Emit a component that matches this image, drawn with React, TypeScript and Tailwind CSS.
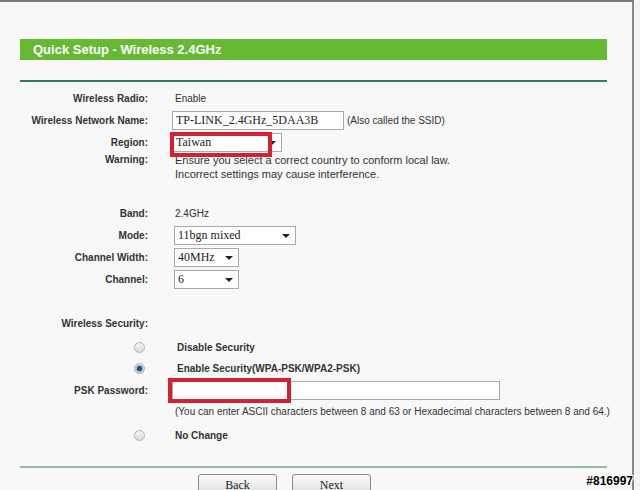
import React from 'react';

const font = { fontFamily: '"Liberation Sans", Arial, sans-serif' };
const serif = '[font-family:Liberation_Serif,serif]';

function Row({ label, children, h = 'h-[22px]' }: { label?: React.ReactNode; children?: React.ReactNode; h?: string }) {
  return (
    <div className={`flex items-center ${h}`}>
      <div className="w-[128px] shrink-0 whitespace-nowrap text-right font-bold text-[#333]">{label}</div>
      <div className="ml-[24px] flex items-center whitespace-nowrap">{children}</div>
    </div>
  );
}

function Select({ value, w }: { value: string; w: string }) {
  return (
    <div className={`relative flex h-[19px] items-center border border-[#a9a9a9] bg-white pl-[3px] text-[12px] text-[#222] ${serif} ${w}`}>
      {value}
      <span className="absolute right-[5px] top-[7px] h-0 w-0 border-x-[4px] border-t-[4px] border-x-transparent border-t-[#222]" />
    </div>
  );
}

function Radio({ checked }: { checked?: boolean }) {
  return (
    <span className="mr-[3px] flex h-[11px] w-[11px] items-center justify-center rounded-full border border-[#b5b5b5] bg-gradient-to-b from-[#f2f2f2] to-[#dcdcdc]">
      {checked && <span className="h-[5px] w-[5px] rounded-full bg-[#1f4f7a] shadow-[0_0_2px_1px_#6aa0cf]" />}
    </span>
  );
}

export default function App() {
  return (
    <div className="relative h-[490px] w-[640px] overflow-hidden bg-[#f4f4f4] text-[10px] text-[#333]" style={font}>
      <div className="h-[490px] w-[634px] border-r-[2px] border-t-[2px] border-r-[#8a8a8a] border-t-[#777] bg-[#f8f8f8] pl-[20px] pt-[37px]">
        <div className="flex h-[21px] w-[587px] items-center bg-[#66b933] pl-[13px] text-[13px] font-bold text-white">
          Quick Setup - Wireless 2.4GHz
        </div>
        <div className="mt-[20px] h-[2px] w-[587px] bg-[#2f7d5c]" />

        <div className="mt-[5px]">
          <Row label="Wireless Radio:">
            <span className="pl-[3px]">Enable</span>
          </Row>
          <Row label="Wireless Network Name:">
            <div className={`flex h-[19px] w-[172px] items-center border border-[#a9a9a9] bg-white pl-[3px] text-[12px] text-[#222] ${serif}`}>
              TP-LINK_2.4GHz_5DAA3B
            </div>
            <span className="ml-[3px]">(Also called the SSID)</span>
          </Row>
          <Row label="Region:">
            <div className="relative">
              <Select value="Taiwan" w="w-[110px]" />
              <div className="absolute left-[-2px] top-[-1px] h-[25px] w-[102px] border-[4px] border-[#d42030]" />
            </div>
          </Row>
          <div className="flex">
            <div className="w-[128px] shrink-0 text-right font-bold leading-[14px]">Warning:</div>
            <div className="ml-[27px] text-[11px] leading-[14px]">
              Ensure you select a correct country to conform local law.
              <br />
              Incorrect settings may cause interference.
            </div>
          </div>
        </div>

        <div className="mt-[21px]">
          <Row label="Band:">
            <span className="pl-[3px]">2.4GHz</span>
          </Row>
          <Row label="Mode:">
            <div className="pl-[2px]">
              <Select value="11bgn mixed" w="w-[122px]" />
            </div>
          </Row>
          <Row label="Channel Width:">
            <div className="pl-[2px]">
              <Select value="40MHz" w="w-[65px]" />
            </div>
          </Row>
          <Row label="Channel:">
            <div className="pl-[2px]">
              <Select value="6" w="w-[65px]" />
            </div>
          </Row>
        </div>

        <div className="mt-[22px]">
          <Row label="Wireless Security:" />
          <Row label={<div className="flex justify-end"><Radio /></div>} h="mt-[2px] h-[22px]">
            <span className="pl-[5px] font-bold">Disable Security</span>
          </Row>
          <Row label={<div className="flex justify-end"><Radio checked /></div>} h="h-[21px]">
            <span className="pl-[5px] font-bold">Enable Security(WPA-PSK/WPA2-PSK)</span>
          </Row>
          <Row label="PSK Password:">
            <div className="relative">
              <div className="h-[19px] w-[328px] border border-[#a9a9a9] bg-white" />
              <div className="absolute left-[-4px] top-[-3px] h-[25px] w-[123px] border-[4px] border-[#d42030]" />
            </div>
          </Row>
          <Row h="h-[21px]">
            <span className="pl-[3px]">(You can enter ASCII characters between 8 and 63 or Hexadecimal characters between 8 and 64.)</span>
          </Row>
          <Row label={<div className="flex justify-end"><Radio /></div>} h="mt-[2px] h-[22px]">
            <span className="pl-[3px] font-bold">No Change</span>
          </Row>
        </div>

        <div className="mt-[20px] h-[2px] w-[587px] bg-[#8fbfa3]" />

        <div className="mt-[6px] flex pl-[178px]">
          <button className={`flex h-[22px] w-[79px] items-center justify-center rounded-[3px] border border-[#8c8c8c] bg-gradient-to-b from-[#fbfbfb] to-[#dedede] text-[12px] text-[#222] ${serif}`}>
            Back
          </button>
          <button className={`ml-[15px] flex h-[22px] w-[79px] items-center justify-center rounded-[3px] border border-[#8c8c8c] bg-gradient-to-b from-[#fbfbfb] to-[#dedede] text-[12px] text-[#222] ${serif}`}>
            Next
          </button>
        </div>
      </div>

      <div className="absolute bottom-[0px] right-[7px] text-[12px] font-bold text-black [text-shadow:-1px_-1px_0_#fff,1px_-1px_0_#fff,-1px_1px_0_#fff,1px_1px_0_#fff]">
        #816997
      </div>
    </div>
  );
}
